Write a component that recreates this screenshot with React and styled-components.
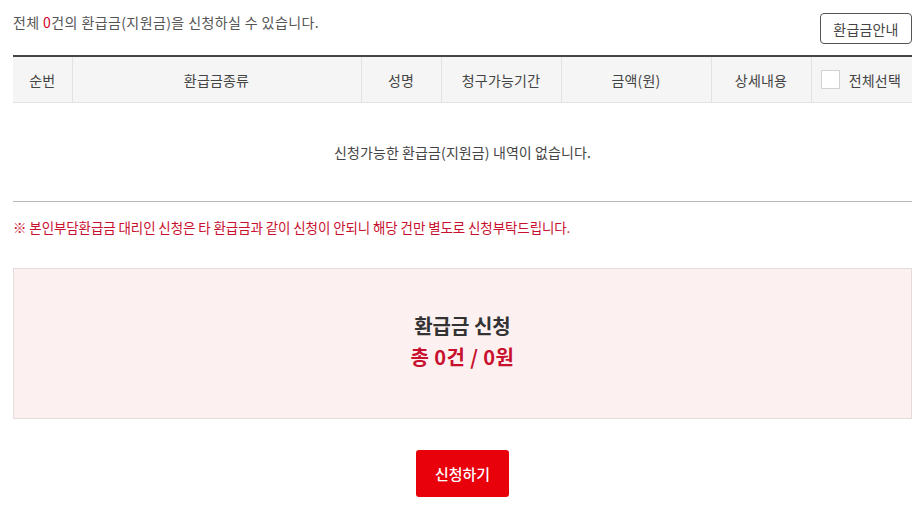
import styled, { createGlobalStyle } from "styled-components";

const columns = [
  { label: "순번", width: 59 },
  { label: "환급금종류", width: 289 },
  { label: "성명", width: 80 },
  { label: "청구가능기간", width: 120 },
  { label: "금액(원)", width: 150 },
  { label: "상세내용", width: 100 },
];

const GlobalStyle = createGlobalStyle`
  body {
    margin: 0;
    background: #fff;
    font-family: "Noto Sans CJK KR", "Noto Sans", sans-serif;
    color: #444;
  }
`;

function App() {
  return (
    <>
      <GlobalStyle />
      <Page>
        <TopRow>
          <Summary>
            전체 <Red>0</Red>건의 환급금(지원금)을 신청하실 수 있습니다.
          </Summary>
          <GuideButton type="button">환급금안내</GuideButton>
        </TopRow>

        <Table>
          <colgroup>
            {columns.map((c) => (
              <col key={c.label} style={{ width: c.width }} />
            ))}
            <col />
          </colgroup>
          <thead>
            <tr>
              {columns.map((c) => (
                <Th key={c.label}>{c.label}</Th>
              ))}
              <Th>
                <SelectAll>
                  <Checkbox type="checkbox" />
                  전체선택
                </SelectAll>
              </Th>
            </tr>
          </thead>
          <tbody>
            <tr>
              <Empty colSpan={7}>신청가능한 환급금(지원금) 내역이 없습니다.</Empty>
            </tr>
          </tbody>
        </Table>

        <Note>※ 본인부담환급금 대리인 신청은 타 환급금과 같이 신청이 안되니 해당 건만 별도로 신청부탁드립니다.</Note>

        <TotalBox>
          <TotalTitle>환급금 신청</TotalTitle>
          <TotalValue>총 0건 / 0원</TotalValue>
        </TotalBox>

        <Actions>
          <SubmitButton type="button">신청하기</SubmitButton>
        </Actions>
      </Page>
    </>
  );
}

const Page = styled.div`
  padding: 13px 8px 0 13px;
`;

const TopRow = styled.div`
  display: flex;
  justify-content: space-between;
  align-items: flex-start;
`;

const Summary = styled.p`
  margin: 0;
  font-size: 14px;
  line-height: 18px;
  color: #555;
  letter-spacing: 0.4px;
`;

const Red = styled.span`
  color: #d3002b;
`;

const GuideButton = styled.button`
  width: 92px;
  height: 31px;
  padding: 0;
  border: 1px solid #555;
  border-radius: 4px;
  background: #fff;
  color: #444;
  font-family: inherit;
  font-size: 14px;
  letter-spacing: 0.2px;
`;

const Table = styled.table`
  width: 100%;
  margin-top: 11px;
  border-collapse: collapse;
  table-layout: fixed;
  border-top: 2px solid #444;
  border-bottom: 1px solid #b8b8b8;
`;

const Th = styled.th`
  height: 45px;
  padding: 0;
  background: #f5f5f5;
  border-left: 1px solid #e2e2e2;
  border-bottom: 1px solid #e2e2e2;
  font-size: 14px;
  font-weight: 400;
  color: #444;
  letter-spacing: 0.2px;

  &:first-child {
    border-left: 0;
  }
`;

const SelectAll = styled.label`
  display: flex;
  align-items: center;
  justify-content: flex-end;
  gap: 9px;
  padding-right: 11px;
`;

const Checkbox = styled.input`
  appearance: none;
  width: 19px;
  height: 19px;
  margin: 0;
  background: #fff;
  border: 1px solid #d2d2d2;
`;

const Empty = styled.td`
  height: 96px;
  text-align: center;
  font-size: 14px;
  color: #444;
  letter-spacing: 0.1px;
`;

const Note = styled.p`
  margin: 16px 0 0;
  font-size: 13.5px;
  line-height: 18px;
  color: #c8102e;
  letter-spacing: -0.1px;
`;

const TotalBox = styled.div`
  margin-top: 32px;
  height: 151px;
  box-sizing: border-box;
  padding-top: 42px;
  display: flex;
  flex-direction: column;
  align-items: center;
  background: #fdf0f0;
  border: 1px solid #e3dcdc;
`;

const TotalTitle = styled.div`
  font-size: 20px;
  font-weight: 700;
  line-height: 30px;
  color: #333;
`;

const TotalValue = styled.div`
  margin-top: 1px;
  font-size: 20px;
  font-weight: 700;
  line-height: 30px;
  letter-spacing: 0.4px;
  color: #c8102e;
`;

const Actions = styled.div`
  display: flex;
  justify-content: center;
  margin-top: 31px;
`;

const SubmitButton = styled.button`
  width: 93px;
  height: 47px;
  border: 0;
  border-radius: 3px;
  background: #e8000b;
  color: #fff;
  font-family: inherit;
  font-size: 15px;
  font-weight: 500;
`;

export default App;
